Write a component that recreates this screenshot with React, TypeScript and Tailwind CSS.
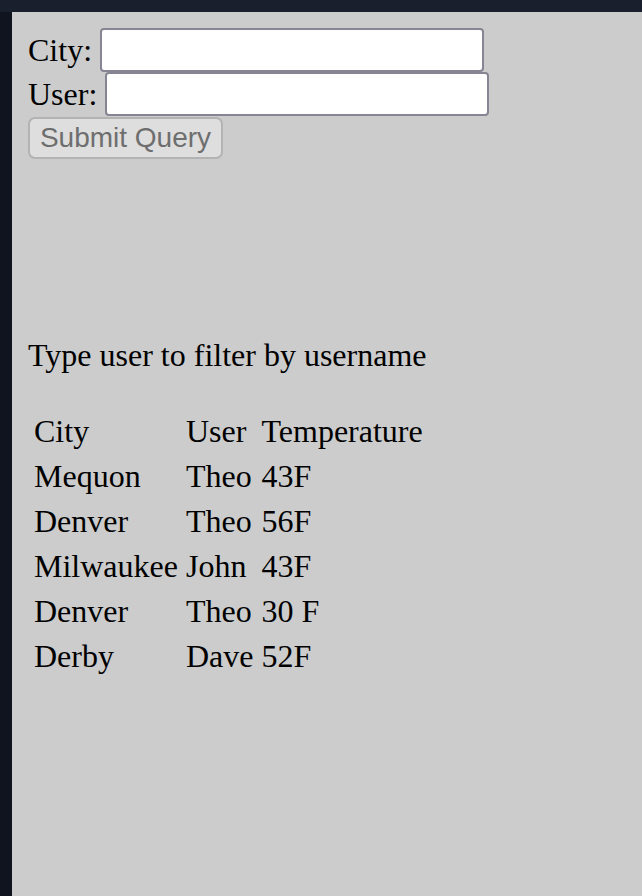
const ROWS = [
  { city: 'Mequon', user: 'Theo', temp: '43F' },
  { city: 'Denver', user: 'Theo', temp: '56F' },
  { city: 'Milwaukee', user: 'John', temp: '43F' },
  { city: 'Denver', user: 'Theo', temp: '30 F' },
  { city: 'Derby', user: 'Dave', temp: '52F' },
];

export default function App() {
  return (
    <div className="min-h-[896px] w-full bg-[#1a1f2e] pt-3">
      <div className="flex min-h-[884px]">
        <div className="w-3 shrink-0 bg-[#10141f]" />
        <div className="flex-1 bg-[#cccccc] px-4 pt-4 font-['Liberation_Serif',serif] text-[32px] leading-[37px] text-black">
          {/* Query form */}
          <form onSubmit={(e) => e.preventDefault()}>
            <div className="flex h-11 items-center gap-2">
              <label>City:</label>
              <input className="h-11 w-[384px] rounded-[4px] border-2 border-[#858593] bg-white" />
            </div>
            <div className="flex h-11 items-center gap-2">
              <label>User:</label>
              <input className="h-11 w-[384px] rounded-[4px] border-2 border-[#858593] bg-white" />
            </div>
            <button
              type="submit"
              className="mt-px h-[42px] w-[195px] rounded-[7px] border-2 border-[#b3b3b3] bg-[#dedede] font-['Liberation_Sans',sans-serif] text-[28px] leading-none text-[#6e6e6e]"
            >
              Submit Query
            </button>
          </form>

          <p className="mt-[178px]">Type user to filter by username</p>

          {/* Results */}
          <table className="mt-[33px] border-separate border-spacing-[4px]">
            <thead>
              <tr>
                <th className="p-[2px] text-left font-normal">City</th>
                <th className="p-[2px] text-left font-normal">User</th>
                <th className="p-[2px] text-left font-normal">Temperature</th>
              </tr>
            </thead>
            <tbody>
              {ROWS.map((r, i) => (
                <tr key={i}>
                  <td className="p-[2px]">{r.city}</td>
                  <td className="p-[2px]">{r.user}</td>
                  <td className="p-[2px]">{r.temp}</td>
                </tr>
              ))}
            </tbody>
          </table>
        </div>
      </div>
    </div>
  );
}
